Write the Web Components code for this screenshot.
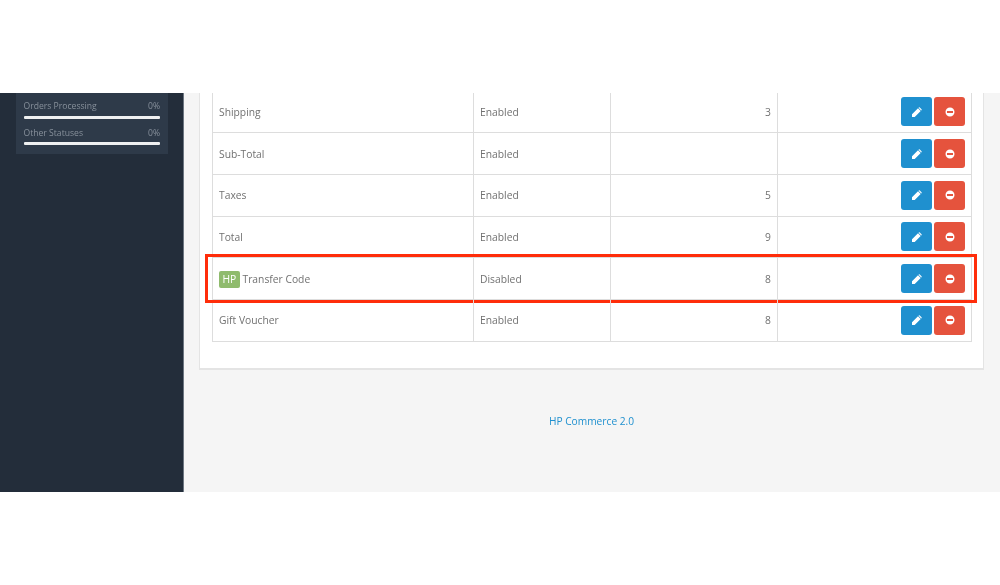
<!DOCTYPE html>
<html>
<head>
<meta charset="utf-8">
<title>Totals</title>
<style>
  html, body { margin: 0; background: #fff; }
  body { padding-top: 93px; font-family: "Open Sans", sans-serif; }
</style>
</head>
<body>
<app-shell>
  <side-bar slot="side">
    <stat-row label="Orders Processing" value="0%"></stat-row>
    <stat-row label="Other Statuses" value="0%"></stat-row>
  </side-bar>
  <totals-panel>
    <total-row status="Enabled" order="3">Shipping</total-row>
    <total-row status="Enabled" order="">Sub-Total</total-row>
    <total-row status="Enabled" order="5">Taxes</total-row>
    <total-row status="Enabled" order="9">Total</total-row>
    <total-row status="Disabled" order="8" highlight><hp-badge>HP</hp-badge> Transfer Code</total-row>
    <total-row status="Enabled" order="8">Gift Voucher</total-row>
  </totals-panel>
  <page-footer>HP Commerce 2.0</page-footer>
</app-shell>

<script>
class AppShell extends HTMLElement {
  constructor() {
    super();
    const shadow = this.attachShadow({ mode: 'open' });
    shadow.innerHTML = `
      <style>
        :host { display: flex; height: 398.5px; overflow: hidden; background: #f5f5f5; }
        .side { flex: 0 0 184px; }
        .main { flex: 1; min-width: 0; padding: 0 16px 0 15px; overflow: hidden; }
      </style>
      <div class="side"><slot name="side"></slot></div>
      <div class="main"><slot></slot></div>
    `;
  }
}

class SideBar extends HTMLElement {
  constructor() {
    super();
    const shadow = this.attachShadow({ mode: 'open' });
    shadow.innerHTML = `
      <style>
        :host { display: block; height: 100%; box-sizing: border-box; background: #232d3a; border-right: 1px solid #6d7681; padding: 0 15px 0 16px; }
        .box { background: #2e3a49; padding: 0 8px 8px 7.5px; }
      </style>
      <div class="box"><slot></slot></div>
    `;
  }
}

class StatRow extends HTMLElement {
  constructor() {
    super();
    const shadow = this.attachShadow({ mode: 'open' });
    shadow.innerHTML = `
      <style>
        :host { display: block; height: 26.5px; font-size: 8.6px; color: #87909b; }
        .line { display: flex; justify-content: space-between; height: 22.5px; line-height: 27px; filter: blur(.3px); }
        .bar { height: 3px; background: #eff0f1; border-radius: 1px; }
      </style>
      <div class="line"><span>${this.getAttribute('label')}</span><span>${this.getAttribute('value')}</span></div>
      <div class="bar"></div>
    `;
  }
}

class TotalsPanel extends HTMLElement {
  constructor() {
    super();
    const shadow = this.attachShadow({ mode: 'open' });
    shadow.innerHTML = `
      <style>
        :host { display: block; margin-top: -1.5px; background: #fff; border: 1px solid #e4e4e4; border-top: 0; border-bottom-width: 2px; padding: 0 11px 26px 12px; }
        .table { border: 1px solid #ddd; border-width: 0 1px; }
      </style>
      <div class="table"><slot></slot></div>
    `;
  }
}

class TotalRow extends HTMLElement {
  constructor() {
    super();
    const shadow = this.attachShadow({ mode: 'open' });
    const mark = this.hasAttribute('highlight') ? '<div class="mark"></div>' : '';
    shadow.innerHTML = `
      <style>
        :host { display: grid; grid-template-columns: 261px 137px 167px 1fr; height: 41.7px; box-sizing: border-box; border-bottom: 1px solid #ddd; position: relative; font-size: 10.3px; color: #717171; }
        .cell { display: flex; align-items: center; padding: 0 6px; border-right: 1px solid #ddd; white-space: nowrap; }
        .txt { filter: blur(.3px); }
        .num { justify-content: flex-end; }
        .acts { justify-content: flex-end; gap: 2px; border-right: 0; }
        .mark { position: absolute; left: -8px; right: -6px; top: -4px; bottom: -4px; border: 3px solid #ff2d0a; pointer-events: none; }
      </style>
      <div class="cell"><span class="txt"><slot></slot></span></div>
      <div class="cell"><span class="txt">${this.getAttribute('status')}</span></div>
      <div class="cell num"><span class="txt">${this.getAttribute('order')}</span></div>
      <div class="cell acts">
        <icon-button kind="edit"></icon-button>
        <icon-button kind="remove"></icon-button>
      </div>
      ${mark}
    `;
  }
}

class IconButton extends HTMLElement {
  constructor() {
    super();
    const shadow = this.attachShadow({ mode: 'open' });
    const isEdit = this.getAttribute('kind') == 'edit';
    // solid shapes read closer to the reference than the outlined font-icon paths at this size
    const path = isEdit
      ? 'M0 10V7.3L6 1.3 8.7 4 2.7 10ZM6.8.5Q7.3 0 7.8.5L9.5 2.2Q10 2.7 9.5 3.2L9.2 3.5 6.5.8Z'
      : 'M5 .5A4.5 4.5 0 1 0 5 9.5 4.5 4.5 0 1 0 5 .5ZM2 4H8V6H2Z';
    shadow.innerHTML = `
      <style>
        :host { display: flex; align-items: center; justify-content: center; width: 31px; height: 29px; border-radius: 3px; background: ${isEdit ? '#1f90cf' : '#e5533d'}; }
        svg { width: 10px; height: 10px; fill: #fff; fill-rule: evenodd; display: block; }
      </style>
      <svg viewBox="0 0 10 10"><path d="${path}"/></svg>
    `;
  }
}

class HpBadge extends HTMLElement {
  constructor() {
    super();
    const shadow = this.attachShadow({ mode: 'open' });
    shadow.innerHTML = `
      <style>
        :host { display: inline-block; background: #8fbb6d; color: #fff; border-radius: 2px; font-size: 10.3px; padding: 0 3.5px; line-height: 17.5px; height: 17.5px; margin-bottom: -2px; }
      </style>
      <slot></slot>
    `;
  }
}

class PageFooter extends HTMLElement {
  constructor() {
    super();
    const shadow = this.attachShadow({ mode: 'open' });
    shadow.innerHTML = `
      <style>
        :host { display: block; text-align: center; margin-top: 44px; font-size: 10.2px; color: #1f90cf; filter: blur(.3px); }
      </style>
      <slot></slot>
    `;
  }
}

customElements.define('app-shell', AppShell);
customElements.define('side-bar', SideBar);
customElements.define('stat-row', StatRow);
customElements.define('totals-panel', TotalsPanel);
customElements.define('total-row', TotalRow);
customElements.define('icon-button', IconButton);
customElements.define('hp-badge', HpBadge);
customElements.define('page-footer', PageFooter);
</script>
</body>
</html>
